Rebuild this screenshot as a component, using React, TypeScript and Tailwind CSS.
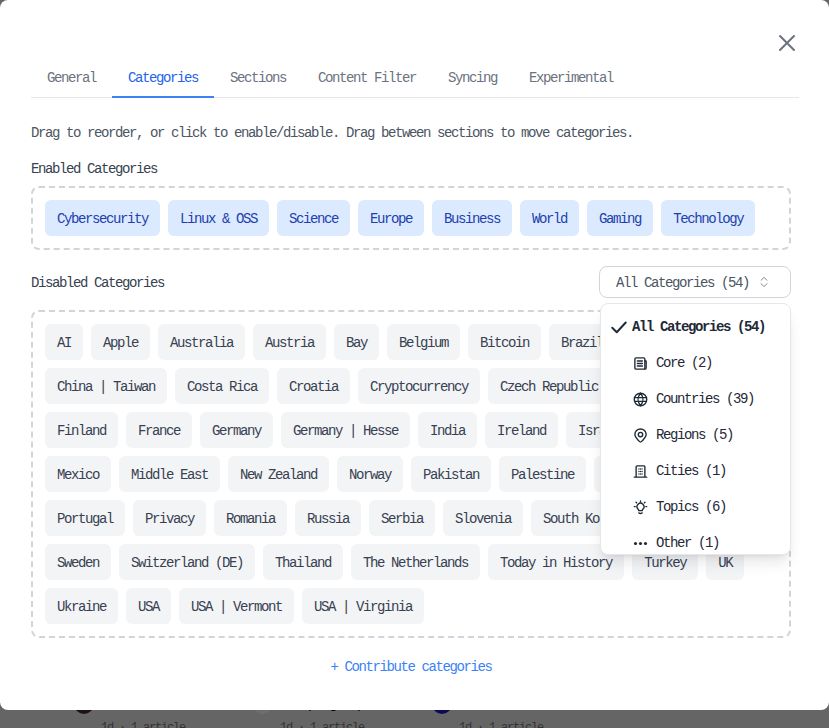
import React from "react";

const enabled = ["Cybersecurity", "Linux & OSS", "Science", "Europe", "Business", "World", "Gaming", "Technology"];
const disabled = [
  "AI", "Apple", "Australia", "Austria", "Bay", "Belgium", "Bitcoin", "Brazil", "Canada", "Chile",
  "China | Taiwan", "Costa Rica", "Croatia", "Cryptocurrency", "Czech Republic", "Denmark", "Estonia",
  "Finland", "France", "Germany", "Germany | Hesse", "India", "Ireland", "Israel", "Italy", "Japan",
  "Mexico", "Middle East", "New Zealand", "Norway", "Pakistan", "Palestine", "Philippines", "Poland",
  "Portugal", "Privacy", "Romania", "Russia", "Serbia", "Slovenia", "South Korea", "Spain", "Sudan",
  "Sweden", "Switzerland (DE)", "Thailand", "The Netherlands", "Today in History", "Turkey", "UK",
  "Ukraine", "USA", "USA | Vermont", "USA | Virginia",
];
const tabs = ["General", "Categories", "Sections", "Content Filter", "Syncing", "Experimental"];

const ico = { width: 15, height: 15, viewBox: "0 0 24 24", fill: "none", stroke: "currentColor", strokeWidth: 2.2, strokeLinecap: "round" as const, strokeLinejoin: "round" as const };

const CoreIcon = () => (
  <svg {...ico}>
    <rect x="3" y="3" width="16" height="18" rx="2" />
    <path d="M19 8h2v11a2 2 0 0 1-2 2M7 8h8M7 12h8M7 16h8" />
  </svg>
);
const GlobeIcon = () => (
  <svg {...ico}>
    <circle cx="12" cy="12" r="10" />
    <path d="M2.500 9h19M2.500 15h19M12 2c-5 6-5 14 0 20M12 2c5 6 5 14 0 20" />
  </svg>
);
const PinIcon = () => (
  <svg {...ico}>
    <path d="M12 22.500c-1 0-1.600-.7-2.300-1.500C6.500 17.500 3 14.500 3 10.500a9 9 0 0 1 18 0c0 4-3.500 7-6.700 10.500-.7.8-1.300 1.500-2.300 1.500z" />
    <circle cx="12" cy="10.500" r="3.500" />
  </svg>
);
const CityIcon = () => (
  <svg {...ico}>
    <path d="M5 21V4.500A1.500 1.500 0 0 1 6.500 3h11A1.500 1.500 0 0 1 19 4.500V21M2 21h20" />
    <path d="M9.500 8h.01M14.500 8h.01M9.500 12h.01M14.500 12h.01M9.500 16h.01M14.500 16h.01M12 8h.01M12 12h.01M12 16h.01" />
  </svg>
);
const BulbIcon = () => (
  <svg {...ico}>
    <path d="M8 14.500a5.500 5.500 0 1 1 8 0c-.8.8-1.200 1.500-1.200 2.500H9.200c0-1-.4-1.700-1.200-2.500zM9.500 20.500c1 1.500 4 1.500 5 0" />
    <path d="M12 1.500v1.500M2 10.500h1.500M20.500 10.500H22M4.800 3.500l1 1M19.200 3.500l-1 1" />
  </svg>
);
const DotsIcon = () => (
  <svg width="15" height="15" viewBox="0 0 24 24" fill="currentColor">
    <circle cx="4" cy="12" r="2.500" />
    <circle cx="12" cy="12" r="2.500" />
    <circle cx="20" cy="12" r="2.500" />
  </svg>
);

const menu: [React.ReactNode, string][] = [
  [<CoreIcon />, "Core (2)"],
  [<GlobeIcon />, "Countries (39)"],
  [<PinIcon />, "Regions (5)"],
  [<CityIcon />, "Cities (1)"],
  [<BulbIcon />, "Topics (6)"],
  [<DotsIcon />, "Other (1)"],
];

const behind = [
  { t: "Market rates", c: "bg-[#1c1410]" },
  { t: "Chimp age span", c: "bg-[#6e6e6e]" },
  { t: "Local news", c: "bg-[#0a0a55]" },
];

export default function App() {
  return (
    <div className="relative h-[728px] w-[829px] overflow-hidden bg-[#656565] font-['Liberation_Mono',monospace] text-sm tracking-[-1.4px]">
      <div className="flex pl-[74px] pt-[694px]">
        {behind.map((b) => (
          <div key={b.t} className="flex w-[179px] gap-[7px]">
            <div className={`h-5 w-5 shrink-0 rounded-full ${b.c}`} />
            <div className="flex flex-col gap-[4px] whitespace-nowrap">
              <span className="h-5 leading-5 text-black">{b.t}</span>
              <span className="h-5 text-xs leading-5 tracking-[-1.2px] text-[#333]">1d · 1 article</span>
            </div>
          </div>
        ))}
      </div>

      <div className="absolute inset-x-0 top-0 h-[710px] rounded-lg bg-white pl-[31px] pr-[30px]">
        <div className="flex h-[98px] flex-col justify-end">
          <div className="flex justify-end pb-[5px]">
            <svg width="24" height="24" viewBox="0 0 24 24" fill="none" stroke="#6b7280" strokeWidth="2" strokeLinecap="round">
              <path d="M5 5l14 14M19 5L5 19" />
            </svg>
          </div>
          <div className="flex border-b border-[#e5e7eb]">
            {tabs.map((t) => (
              <div
                key={t}
                className={`-mb-px h-[38px] border-b-2 px-4 pt-[8px] leading-5 ${t === "Categories" ? "border-[#3b82f6] text-[#2563eb]" : "border-transparent text-[#6b7280]"}`}
              >
                {t}
              </div>
            ))}
          </div>
        </div>

        <div className="w-[760px]">
          <p className="mt-[24px] pt-px leading-5 text-[#4b5563]">Drag to reorder, or click to enable/disable. Drag between sections to move categories.</p>
          <h3 className="mt-[14px] pt-[2px] leading-5 text-[#374151]">Enabled Categories</h3>
          <div className="mt-[7px] flex flex-wrap gap-2 rounded-lg border-2 border-dashed border-[#d1d5db] p-3">
            {enabled.map((c) => (
              <span key={c} className="flex h-9 items-center rounded-md bg-[#dbeafe] px-3 pt-[2px] text-[#1e40af]">{c}</span>
            ))}
          </div>

          <div className="relative mt-4 flex h-8 items-center justify-between">
            <h3 className="pt-[2px] leading-5 text-[#374151]">Disabled Categories</h3>
            <div className="flex h-8 w-[192px] items-center justify-between rounded-lg border border-[#d1d5db] pl-4 pr-[19px] text-[#4b5563]">
              <span className="pt-[2px]">All Categories (54)</span>
              <svg width="14" height="14" viewBox="0 0 24 24" fill="none" stroke="#6b7280" strokeWidth="1.500" strokeLinecap="round" strokeLinejoin="round">
                <path d="M7 9l5-5 5 5M7 15l5 5 5-5" />
              </svg>
            </div>
            <div className="absolute left-[569px] top-[37px] z-10 h-[252px] w-[191px] overflow-hidden rounded-lg border border-[#e5e7eb] bg-white pt-[5px] text-[#1f2937] shadow-lg">
              <div className="flex h-9 items-center pl-[9px] font-bold">
                <svg width="18" height="18" viewBox="0 0 24 24" fill="none" stroke="currentColor" strokeWidth="2.600" strokeLinecap="round" strokeLinejoin="round" className="mr-[4px]">
                  <path d="M3 13l6 6L21 6" />
                </svg>
                All Categories (54)
              </div>
              {menu.map(([icon, label]) => (
                <div key={label} className="flex h-9 items-center pl-[32px]">
                  <span className="mr-[8px] flex w-[15px] justify-center">{icon}</span>
                  {label}
                </div>
              ))}
            </div>
          </div>

          <div className="mt-3 flex flex-wrap gap-2 rounded-lg border-2 border-dashed border-[#d1d5db] p-3">
            {disabled.map((c) => (
              <span key={c} className="flex h-9 items-center whitespace-nowrap rounded-md bg-[#f3f4f6] px-3 pt-[2px] text-[#374151]">{c}</span>
            ))}
          </div>

          <div className="mt-[18px] pt-px text-center leading-5 text-[#3b82f6]">+ Contribute categories</div>
        </div>
      </div>
    </div>
  );
}
